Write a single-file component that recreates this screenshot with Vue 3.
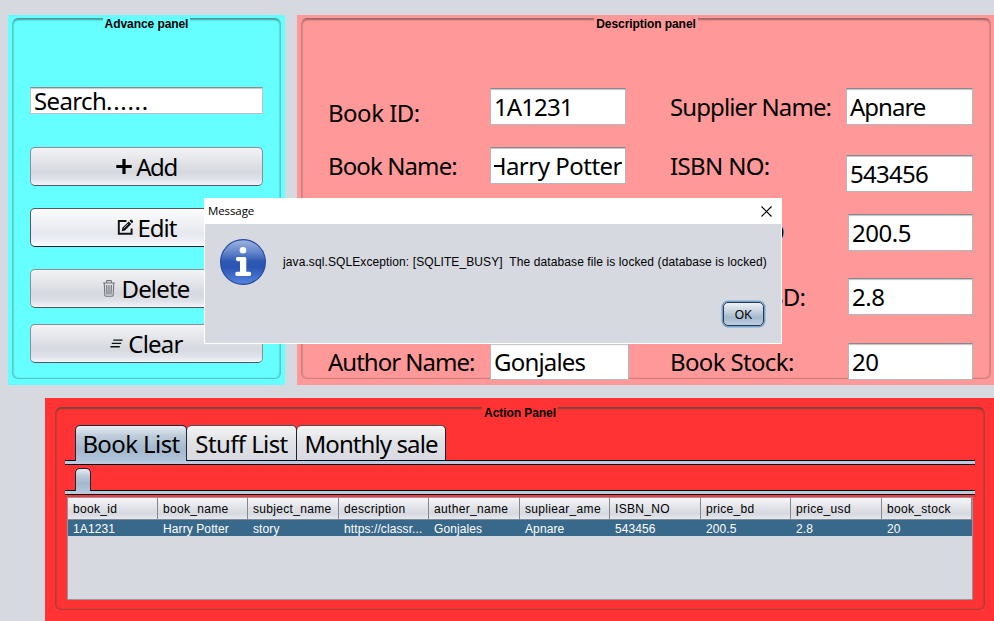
<script setup>
const columns = [
  { name: 'book_id', value: '1A1231' },
  { name: 'book_name', value: 'Harry Potter' },
  { name: 'subject_name', value: 'story' },
  { name: 'description', value: 'https://classr...' },
  { name: 'auther_name', value: 'Gonjales' },
  { name: 'supliear_ame', value: 'Apnare' },
  { name: 'ISBN_NO', value: '543456' },
  { name: 'price_bd', value: '200.5' },
  { name: 'price_usd', value: '2.8' },
  { name: 'book_stock', value: '20' }
]
</script>

<template>
  <div class="window">
    <div class="top">
      <section class="panel advance">
        <div class="frame">
          <h2 class="title">Advance panel</h2>
          <div class="search">Search<span class="dots">......</span></div>
          <button class="btn add">
            <svg width="16" height="16" viewBox="0 0 16 16"><path d="M8 0V15M0.3 7.5H15.7" stroke="#000" stroke-width="3.2" /></svg>
            <span>Add</span>
          </button>
          <button class="btn edit">
            <svg width="17" height="17" viewBox="0 0 17 17">
              <path d="M9.5 2H1.8V14.7H14.6V9.5" fill="none" stroke="#111" stroke-width="1.9" />
              <path d="M4.7 12.3L5.4 8.8L11.7 2.5L14.3 5.1L8 11.4Z" fill="#111" />
              <path d="M12.5 1.7L13.5 0.7Q14.2 0.2 14.9 0.9L15.8 1.8Q16.5 2.5 15.9 3.2L15 4.2Z" fill="#111" />
              <path d="M6.8 9.2L11.2 4.8" stroke="#eee" stroke-width=".7" />
            </svg>
            <span>Edit</span>
          </button>
          <button class="btn delete">
            <svg width="12" height="17" viewBox="0 0 12 17" fill="none" stroke="#73757b">
              <path d="M0 3H12M3.6 2.8V1.2Q3.6 .6 4.3 .6H7.7Q8.4 .6 8.4 1.2V2.8M1.3 3.4L1.8 15Q1.9 16.2 3 16.2H9Q10.1 16.2 10.2 15L10.7 3.4" stroke-width="1.1" />
              <path d="M3.6 5L4 14.5M6 5V14.5M8.4 5L8 14.5" stroke-width="1.2" />
            </svg>
            <span>Delete</span>
          </button>
          <button class="btn clear">
            <svg width="13" height="9" viewBox="0 0 13 9"><path d="M3.2 1.1H12.6M1.8 4.4H11.2M.4 7.7H9.8" stroke="#111" stroke-width="1.4" /></svg>
            <span>Clear</span>
          </button>
        </div>
      </section>

      <section class="panel description">
        <div class="frame">
          <h2 class="title">Description panel</h2>
          <div class="form">
            <div class="col labels-a">
              <label class="l-id">Book ID:</label>
              <label class="l-name">Book Name:</label>
              <label class="l-author">Author Name:</label>
            </div>
            <div class="col fields-a">
              <div class="field"><span class="f-id">1A1231</span></div>
              <div class="field scrolled"><div class="view"><span>Harry Potter</span></div></div>
              <div class="field author"><span>Gonjales</span></div>
            </div>
            <div class="col labels-b">
              <label class="l-supplier">Supplier Name:</label>
              <label class="l-isbn">ISBN NO:</label>
              <label class="l-bd">Price in BD</label>
              <label class="l-usd">Price in USD:</label>
              <label class="l-stock">Book Stock:</label>
            </div>
            <div class="col fields-b">
              <div class="field supplier"><span>Apnare</span></div>
              <div class="field isbn"><span>543456</span></div>
              <div class="field short bd"><span>200.5</span></div>
              <div class="field short usd"><span>2.8</span></div>
              <div class="field short stock"><span>20</span></div>
            </div>
          </div>
        </div>
      </section>
    </div>

    <section class="panel action">
      <div class="frame">
        <h2 class="title">Action Panel</h2>
        <div class="tabs">
          <div class="tab active t1"><span>Book List</span></div>
          <div class="tab t2"><span>Stuff List</span></div>
          <div class="tab t3"><span>Monthly sale</span></div>
        </div>
        <div class="strip"></div>
        <div class="tabs sub"><div class="tab active empty"></div></div>
        <div class="strip second"></div>
        <div class="table">
          <div class="row head">
            <div v-for="c in columns" :key="c.name" class="cell">{{ c.name }}</div>
          </div>
          <div class="row selected">
            <div v-for="c in columns" :key="c.name" class="cell">{{ c.value }}</div>
          </div>
        </div>
      </div>
    </section>

    <div class="dialog">
      <header class="bar">
        <span class="caption">Message</span>
        <svg width="11" height="11" viewBox="0 0 11 11"><path d="M.5 .5L10.5 10.5M10.5 .5L.5 10.5" stroke="#000" stroke-width="1.1" /></svg>
      </header>
      <div class="message">
        <svg width="46" height="46" viewBox="0 0 46 46">
          <defs>
            <linearGradient id="ball" x1="0" y1="0" x2="0" y2="1">
              <stop offset="0" stop-color="#9db4e2" />
              <stop offset=".3" stop-color="#5f82cb" />
              <stop offset=".48" stop-color="#3059b2" />
              <stop offset=".62" stop-color="#2a55b3" />
              <stop offset="1" stop-color="#5585e2" />
            </linearGradient>
          </defs>
          <circle cx="23" cy="23" r="22.4" fill="url(#ball)" stroke="#27499a" stroke-width="1.1" />
          <circle cx="23" cy="11.2" r="3.3" fill="#fff" />
          <path d="M17.6 18H24.8Q26.3 18 26.3 19.5V32.8H29.4Q31.2 32.8 31.2 34.9T29.4 37H17Q15.2 37 15.2 34.9T17 32.8H20V22.2H17.6Q15.9 22.2 15.9 20.1T17.6 18Z" fill="#fff" />
        </svg>
        <p>java.sql.SQLException: [SQLITE_BUSY]&nbsp; The database file is locked (database is locked)</p>
      </div>
      <button class="ok">OK</button>
    </div>
  </div>
</template>

<style>
body {
  overflow: hidden;
}
</style>

<style scoped>
.window {
  position: relative;
  width: 994px;
  height: 621px;
  overflow: hidden;
  background: #d6d9e0;
  color: #000;
  font-family: "Liberation Sans", Arial, sans-serif;
  font-size: 12px;
}
.window * {
  box-sizing: border-box;
}
.top {
  display: flex;
  gap: 12px;
  padding: 15px 0 0 8px;
}
.panel {
  height: 370px;
  flex: none;
}
.frame {
  display: flex;
  flex-direction: column;
  border: 1px solid var(--edge);
  border-top-color: var(--dark);
  border-bottom-color: var(--edge);
  border-radius: 6px;
  box-shadow: inset 0 2px 2px -1px var(--dark), inset 1px 0 2px -1px var(--dark), inset -1px 0 2px -1px var(--dark);
}
.title {
  align-self: center;
  height: 14px;
  margin: -2px 0 0;
  padding: 0 2px;
  background: var(--fill);
  font-size: 12px;
  line-height: 15px;
  font-weight: bold;
  letter-spacing: -0.07px;
  white-space: nowrap;
}
.advance {
  --fill: #66ffff;
  --edge: #50c9cc;
  --dark: #479b9e;
  width: 277px;
  padding: 3px 4px;
  background: var(--fill);
}
.advance .frame {
  height: 361px;
}
.search,
.btn,
.field,
.col,
.tab {
  font-family: "Noto Sans", Tahoma, sans-serif;
  font-size: 24px;
  line-height: 30px;
  letter-spacing: -0.65px;
  white-space: nowrap;
}
.search {
  width: 233px;
  height: 27px;
  margin: 56px 0 0 17px;
  padding: 0 3px;
  border: 1px solid #c0c0c4;
  border-top-color: #888b90;
  background: #fff;
  box-shadow: inset 0 2px 1px -1px #c6c6c8;
  line-height: 25px;
}
.dots {
  letter-spacing: 0.7px;
}
.btn {
  display: flex;
  align-items: center;
  justify-content: center;
  width: 233px;
  height: 39px;
  margin: 0 0 0 17px;
  padding: 0;
  border: 1px solid #8b8e96;
  border-bottom-color: #55565f;
  border-radius: 5px;
  background: linear-gradient(#f3f3f5, #e4e5e9 35%, #d5d8df 65%, #e1e3eb 85%, #f3f4fa);
  color: #000;
}
.btn svg {
  margin-right: 4px;
}
.add {
  margin-top: 33px;
  letter-spacing: -1.4px;
}
.edit {
  margin-top: 22px;
  border-color: #555861;
  border-bottom-color: #22242a;
  background: linear-gradient(#fcfcfd, #f1f2f5 35%, #e5e8ee 65%, #eef0f6 85%, #fbfbff);
  letter-spacing: -1px;
}
.delete {
  margin-top: 22px;
  letter-spacing: -0.8px;
}
.delete svg {
  margin-right: 6px;
}
.clear {
  margin-top: 16px;
  letter-spacing: -0.8px;
}
.clear svg {
  margin-right: 5px;
}
.description {
  --fill: #ff9999;
  --edge: #d27e80;
  --dark: #a16467;
  width: 698px;
  padding: 3px 4px;
  background: var(--fill);
}
.description .frame {
  height: 361px;
}
.form {
  display: flex;
  padding-left: 26px;
}
.col {
  display: flex;
  flex-direction: column;
  align-items: flex-start;
  flex: none;
}
.labels-a {
  width: 162px;
}
.fields-a {
  width: 180px;
}
.labels-b {
  width: 176px;
}
.l-id {
  margin-top: 67px;
  letter-spacing: -0.5px;
}
.l-name {
  margin-top: 23px;
  letter-spacing: -0.9px;
}
.l-author {
  margin-top: 166px;
  letter-spacing: -1px;
}
.l-supplier {
  margin-top: 61px;
  letter-spacing: -0.9px;
}
.l-isbn {
  margin-top: 29px;
}
.l-bd {
  margin-top: 36px;
  letter-spacing: -0.75px;
}
.l-usd,
.l-stock {
  margin-top: 35px;
}
.field {
  width: 136px;
  height: 37px;
  margin-top: 57px;
  padding: 0 3px;
  border: 1px solid #b3b8bd;
  border-top-color: #86898d;
  background: #fff;
  box-shadow: inset 0 2px 1px -1px #c2c3c5;
  line-height: 36px;
  overflow: hidden;
}
.f-id {
  letter-spacing: -0.9px;
}
.field.scrolled {
  margin-top: 22px;
}
.view {
  display: flex;
  justify-content: flex-end;
  overflow: hidden;
  letter-spacing: -0.5px;
}
.field.author {
  width: 139px;
  margin-top: 159px;
  letter-spacing: -0.8px;
}
.fields-b .field {
  width: 127px;
}
.fields-b .supplier {
  letter-spacing: -1px;
}
.fields-b .isbn {
  margin-top: 30px;
  letter-spacing: -0.75px;
}
.fields-b .short {
  width: 125px;
  margin-left: 2px;
  letter-spacing: -0.45px;
}
.fields-b .bd {
  margin-top: 22px;
}
.fields-b .usd {
  margin-top: 27px;
}
.fields-b .stock {
  margin-top: 28px;
}
.action {
  --fill: #ff3333;
  --edge: #b03d38;
  --dark: #7d433a;
  height: 223px;
  margin: 13px 0 0 45px;
  padding: 9px 9px 11px 10px;
  background: var(--fill);
}
.action .frame {
  height: 203px;
}
.action .title {
  margin-top: -3px;
  line-height: 17px;
}
.tabs {
  display: flex;
  height: 35px;
  margin: 6px 0 0 19px;
}
.tab {
  display: flex;
  justify-content: center;
  border: 1px solid #4c4e58;
  border-right-color: #20222d;
  border-bottom: 0;
  border-radius: 5px 5px 0 0;
  background: linear-gradient(#f5f5f6, #e0e1e5 50%, #d8dae1);
  line-height: 36px;
  letter-spacing: -0.6px;
}
.tab.active {
  position: relative;
  height: calc(100% + 1px);
  border-color: #1d2634;
  background: linear-gradient(#e7edf2, #bccbd9 30%, #a3b8cc 65%, #b0c4da);
}
.t1 {
  width: 112px;
}
.t2 {
  width: 110px;
  border-left: 0;
}
.t3 {
  width: 149px;
  border-left: 0;
  letter-spacing: -0.9px;
}
.strip {
  flex: none;
  width: 910px;
  height: 5px;
  margin-left: 9px;
  border: solid #050514;
  border-width: 1px 0;
  background: #b8cbe2;
}
.strip.second {
  background: #b7cbd9;
}
.sub {
  height: 22px;
  margin-top: 3px;
}
.empty {
  width: 16px;
}
.table {
  width: 906px;
  height: 103px;
  margin: 2px 0 0 11px;
  border: 1px solid #9297a1;
  background: #d6d9e0;
}
.row {
  display: grid;
  grid-template-columns: 90px 90px 91px 90px 91px 90px 91px 90px 91px 90px;
}
.head {
  height: 22px;
  border-bottom: 1px solid #858992;
  background: linear-gradient(#f7f7f9, #dfe1e6 50%, #d6d9e0 75%, #e6e8ef);
}
.cell {
  padding-left: 5px;
  white-space: nowrap;
  line-height: 18px;
}
.head .cell {
  border-right: 1px solid #84878e;
  line-height: 22px;
  letter-spacing: 0.32px;
}
.selected {
  height: 16px;
  background: #39698a;
  color: #fff;
  letter-spacing: 0.1px;
}
.dialog {
  position: absolute;
  left: 204px;
  top: 198px;
  width: 578px;
  height: 146px;
  display: flex;
  flex-direction: column;
  border: 1px solid #fff;
  background: #d6d9e0;
}
.bar {
  display: flex;
  justify-content: space-between;
  height: 25px;
  padding: 7px 9px 0 3px;
  background: #fff;
}
.caption {
  margin-top: -1px;
  font-family: "Open Sans", "Segoe UI", sans-serif;
  font-size: 11.5px;
  line-height: 12px;
  letter-spacing: -0.1px;
}
.message {
  display: flex;
  padding: 15px 0 0 15px;
}
.message p {
  margin: 15px 0 0 17px;
  line-height: 16px;
  letter-spacing: 0.1px;
  white-space: nowrap;
}
.ok {
  width: 41px;
  height: 24px;
  margin: 17px 0 0 518px;
  padding: 1px 0 0;
  border: 1px solid #26384b;
  border-radius: 5px;
  background: linear-gradient(#eef2f6, #c3d0dc 40%, #a5b9cc 65%, #bccfe2);
  box-shadow: 0 0 0 1.5px #75a5cf;
  color: #000;
  font: 12px "Liberation Sans", Arial, sans-serif;
}
</style>
